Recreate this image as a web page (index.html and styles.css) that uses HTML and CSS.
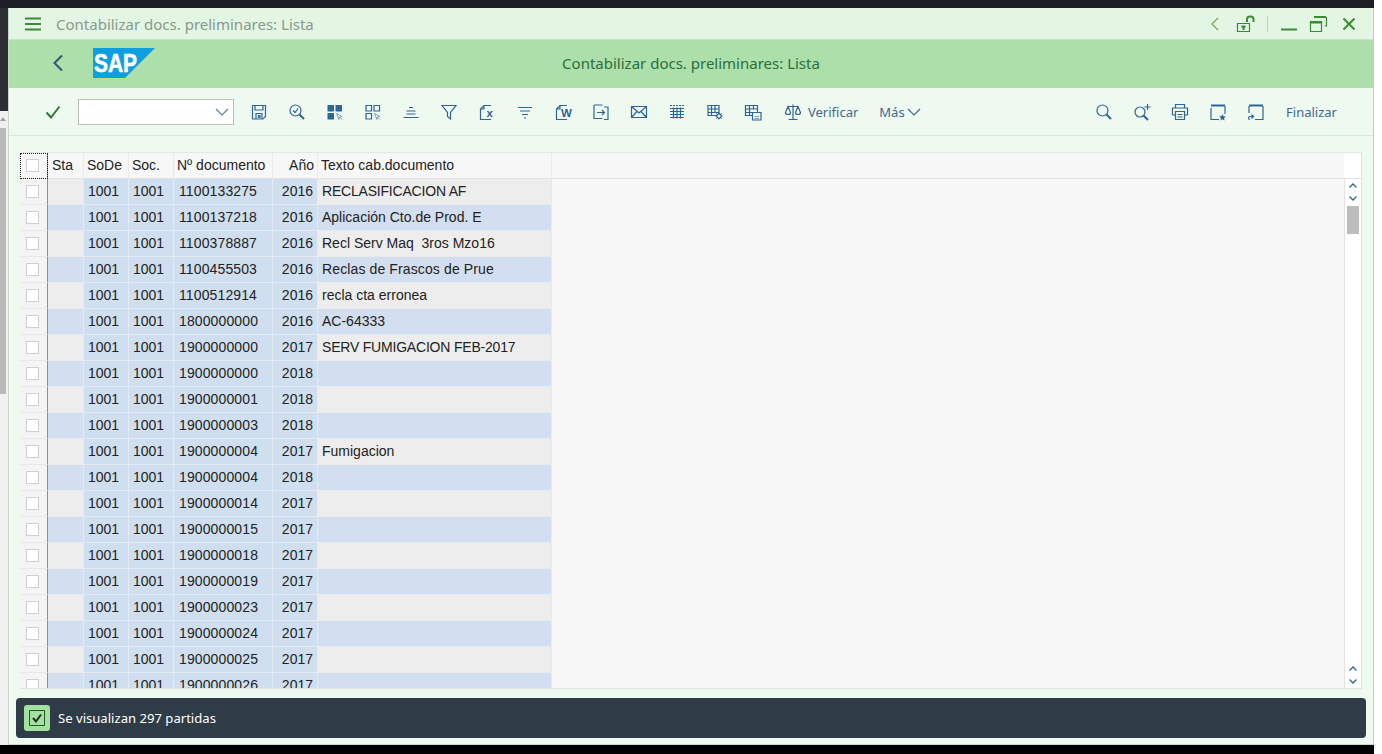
FILE: index.html
```html
<!DOCTYPE html>
<html lang="es">
<head>
    <meta charset="UTF-8">
    <title>Contabilizar docs. preliminares: Lista</title>
    <link rel="stylesheet" href="styles.css">
</head>
<body>
    <div class="screen">
        <div class="top-strip"></div>
        <div class="middle">
            <div class="left-strip">
                <div class="left-dark"></div>
                <div class="left-track">
                    <span class="left-arrow"></span>
                    <div class="left-thumb"></div>
                </div>
            </div>
            <div class="window">
                <div class="titlebar">
                    <svg class="menu-icon" width="16" height="14" viewBox="0 0 16 14"><path d="M0 1.5h16M0 7h16M0 12.5h16"/></svg>
                    <span class="title-text">Contabilizar docs. preliminares: Lista</span>
                    <div class="title-actions">
                        <svg class="win-icon" width="20" height="20" viewBox="0 0 20 20"><path class="thin olive" d="M13 4L7 10l6 6"/></svg>
                        <svg class="win-icon lock" width="20" height="20" viewBox="0 0 20 20"><path class="thin" d="M2.5 9.5h12v8h-12z"/><path d="M12 8V5.500a3 3 0 0 1 3-3h.5a3 3 0 0 1 3 3v2.500"/><path class="dot" d="M6.500 11.500h4v2l-1 .5v2h-2v-2l-1-.5z"/></svg>
                        <span class="title-sep"></span>
                        <svg class="win-icon min" width="20" height="20" viewBox="0 0 20 20"><path d="M2 15.500h16"/></svg>
                        <svg class="win-icon max" width="20" height="20" viewBox="0 0 20 20"><path class="thin" d="M2.500 7.500h11v10h-11z"/><path d="M2.500 8.500h11" /><path d="M6 3h12"/><path class="thin" d="M18.500 3v9h-2"/></svg>
                        <svg class="win-icon close" width="20" height="20" viewBox="0 0 20 20"><path d="M4.500 4.500l11 11M15.500 4.500l-11 11"/></svg>
                    </div>
                </div>

                <div class="banner">
                    <svg class="back-icon" width="12" height="18" viewBox="0 0 12 18"><path d="M10 1.500L2.500 9l7.500 7.500"/></svg>
                    <svg class="sap-logo" width="62" height="30" viewBox="0 0 62 30">
                        <polygon points="0,0 62,0 32,30 0,30" fill="#0f9fe0"/>
                        <text x="1" y="24" class="sap-text" textLength="43" lengthAdjust="spacingAndGlyphs">SAP</text>
                    </svg>
                    <span class="banner-title">Contabilizar docs. preliminares: Lista</span>
                </div>

                <div class="toolbar">
                    <span class="tool"><svg width="20" height="20" viewBox="0 0 20 20"><path class="ok" d="M3.500 10.500l4.500 5 8.500-11"/></svg></span>
                    <div class="command">
                        <svg width="14" height="8" viewBox="0 0 14 8"><path d="M1 1l6 6 6-6"/></svg>
                    </div>
                    <span class="tool"><svg width="20" height="20" viewBox="0 0 20 20"><path d="M3.500 3.500h13v11l-2.500 2.500h-10.500z"/><path d="M6 3.500v4.500h8v-4.500M7 17v-5.500h6V17"/><path d="M9.500 13.500h1.500v2h-1.500z"/></svg></span>
                    <span class="tool"><svg width="20" height="20" viewBox="0 0 20 20"><circle cx="8.500" cy="8.500" r="5.500"/><path class="bold" d="M12.500 12.500L17 17"/><path d="M6 8.500l2 2 3-4"/></svg></span>
                    <span class="tool"><svg width="20" height="20" viewBox="0 0 20 20"><path class="solid" d="M2.500 3h6.500v6.500H2.500zM10.500 3H17v6.500h-6.500zM2.500 11H9v6.500H2.500z"/><path class="thin" d="M11.500 11.500l5.500 3-2.500 .5-.5 2.500zM15 15.500l2 2"/></svg></span>
                    <span class="tool"><svg width="20" height="20" viewBox="0 0 20 20"><path d="M3 3.500h5.500V9H3zM11 3.500h5.500V9H11zM3 11.500h5.500V17H3z"/><path class="thin" d="M11.500 11.500l5.500 3-2.500 .5-.5 2.500zM15 15.500l2 2"/></svg></span>
                    <span class="tool"><svg width="20" height="20" viewBox="0 0 20 20"><path d="M8 5.500h4M5.500 9h9M5.500 12h9M2.500 15.500h15"/></svg></span>
                    <span class="tool"><svg width="20" height="20" viewBox="0 0 20 20"><path d="M3 3.500h14l-5.500 7v6.500l-3-2.500v-4z"/></svg></span>
                    <span class="tool"><svg width="20" height="20" viewBox="0 0 20 20"><path d="M14 3.500H7L3.500 7v10.500H14M7 3.500V7H3.500"/><text x="9.500" y="15" class="icon-letter">x</text></svg></span>
                    <span class="tool"><svg width="20" height="20" viewBox="0 0 20 20"><path d="M3 5.500h14M5 9h10M7 12.500h6M9 16h2"/></svg></span>
                    <span class="tool"><svg width="20" height="20" viewBox="0 0 20 20"><path d="M14 3.500H7L3.500 7v10.500H14M7 3.500V7H3.500"/><text x="8" y="15" class="icon-letter">W</text></svg></span>
                    <span class="tool"><svg width="20" height="20" viewBox="0 0 20 20"><path d="M3 3h8.500M3 3v13.500h8.500M13 5h4v12.500h-4"/><path d="M6 10.500h7.500M11 8l2.500 2.500-2.500 2.500"/></svg></span>
                    <span class="tool"><svg width="20" height="20" viewBox="0 0 20 20"><path d="M2.500 4.500h15v11h-15zM2.500 4.500L10 11l7.500-6.500M2.500 15.500L8 9.500M17.500 15.500L12 9.500"/></svg></span>
                    <span class="tool"><svg width="20" height="20" viewBox="0 0 20 20"><path class="dash" d="M3 3.500h14"/><path d="M3 6.500h14M3 9.500h14M3 12.500h14M3 15.500h14M6.500 5.500v11M10 5.500v11M13.500 5.500v11"/></svg></span>
                    <span class="tool"><svg width="20" height="20" viewBox="0 0 20 20"><path d="M3 3.500h11v10H3zM3 7h11M3 10.500h11M6.500 3.500v10M10 3.500v7"/><circle class="clear" cx="14" cy="14" r="2.200"/><path class="gear" d="M14 10.500v1.500M14 16v1.500M10.500 14H12M16 14h1.500M11.500 11.500l1 1M15.500 15.500l1 1M16.500 11.500l-1 1M12.500 15.500l-1 1"/></svg></span>
                    <span class="tool"><svg width="20" height="20" viewBox="0 0 20 20"><path d="M2.500 3.500h12v10h-12zM2.500 7h12M2.500 10.500h12M6.500 3.500v10M10.500 3.500v3.500"/><path class="clear" d="M9.500 10.500h8.500v7.500H9.500z"/><path class="thin" d="M11.500 14.500h4.500M11.500 16.500h4.500"/></svg></span>
                    <span class="tool-text verify">
                        <svg width="20" height="20" viewBox="0 0 20 20"><path d="M10 2.500v14.500M5.500 17.500h9M5 4.500h10M5 4.500l-2.500 6a2.500 2 0 0 0 5 0zM15 4.500l-2.500 6a2.500 2 0 0 0 5 0z"/></svg>
                        Verificar
                    </span>
                    <span class="tool-text more">
                        Más
                        <svg width="14" height="8" viewBox="0 0 14 8"><path d="M1 1l6 6 6-6"/></svg>
                    </span>
                    <div class="toolbar-right">
                        <span class="tool"><svg width="20" height="20" viewBox="0 0 20 20"><circle cx="8.500" cy="8.500" r="5.500"/><path class="bold" d="M12.500 12.500L17 17"/></svg></span>
                        <span class="tool"><svg width="20" height="20" viewBox="0 0 20 20"><circle cx="8" cy="10" r="5"/><path class="bold" d="M11.500 13.500L16 18"/><path d="M15.500 2v6M12.500 5h6"/></svg></span>
                        <span class="tool"><svg width="20" height="20" viewBox="0 0 20 20"><path d="M5.500 6V2.500h9V6M5.500 13H2.500V6h15v7h-3"/><path d="M5.500 9.500h9v8h-9zM7.500 12.500h5M7.500 15h5"/></svg></span>
                        <span class="tool"><svg width="20" height="20" viewBox="0 0 20 20"><path d="M3 6v11.500h8"/><path class="bold" d="M3 3.500h14"/><path d="M17 4v8"/><path class="solid" d="M14.500 12l1 2.200 2.300.3-1.700 1.600.4 2.400-2-1.200-2 1.200.4-2.400-1.700-1.600 2.300-.3z"/></svg></span>
                        <span class="tool"><svg width="20" height="20" viewBox="0 0 20 20"><path d="M3 4v7M17 4v13.500H9"/><path class="bold" d="M3 3.500h14"/><path d="M7 14.500H4a1.500 1.500 0 0 0 0 3M5.500 12.500l2 2-2 2"/></svg></span>
                        <span class="tool-text finish">Finalizar</span>
                    </div>
                </div>

                <div class="content">
                    <div class="list-panel">
                        <div class="grid-scroll">
                            <table class="doc-table">
                                <colgroup>
                                    <col class="c-sel"><col class="c-sta"><col class="c-sode"><col class="c-soc"><col class="c-num"><col class="c-year"><col class="c-text"><col>
                                </colgroup>
                                <thead>
                                    <tr>
                                        <th class="sel sel-head"><span class="check"></span></th>
                                        <th class="sta-head">Sta</th>
                                        <th>SoDe</th>
                                        <th>Soc.</th>
                                        <th>Nº documento</th>
                                        <th class="right">Año</th>
                                        <th>Texto cab.documento</th>
                                        <th class="filler"></th>
                                    </tr>
                                </thead>
                                <tbody>
                                    <tr class="odd"><td class="sel"><span class="check"></span></td><td class="sta"></td><td class="key">1001</td><td class="key">1001</td><td class="key num">1100133275</td><td class="key right">2016</td><td class="txt caps">RECLASIFICACION AF</td><td class="filler"></td></tr>
                                    <tr class="even"><td class="sel"><span class="check"></span></td><td class="sta"></td><td class="key">1001</td><td class="key">1001</td><td class="key num">1100137218</td><td class="key right">2016</td><td class="txt">Aplicación Cto.de Prod. E</td><td class="filler"></td></tr>
                                    <tr class="odd"><td class="sel"><span class="check"></span></td><td class="sta"></td><td class="key">1001</td><td class="key">1001</td><td class="key num">1100378887</td><td class="key right">2016</td><td class="txt">Recl Serv Maq&nbsp; 3ros Mzo16</td><td class="filler"></td></tr>
                                    <tr class="even"><td class="sel"><span class="check"></span></td><td class="sta"></td><td class="key">1001</td><td class="key">1001</td><td class="key num">1100455503</td><td class="key right">2016</td><td class="txt wide">Reclas de Frascos de Prue</td><td class="filler"></td></tr>
                                    <tr class="odd"><td class="sel"><span class="check"></span></td><td class="sta"></td><td class="key">1001</td><td class="key">1001</td><td class="key num">1100512914</td><td class="key right">2016</td><td class="txt">recla cta erronea</td><td class="filler"></td></tr>
                                    <tr class="even"><td class="sel"><span class="check"></span></td><td class="sta"></td><td class="key">1001</td><td class="key">1001</td><td class="key num">1800000000</td><td class="key right">2016</td><td class="txt">AC-64333</td><td class="filler"></td></tr>
                                    <tr class="odd"><td class="sel"><span class="check"></span></td><td class="sta"></td><td class="key">1001</td><td class="key">1001</td><td class="key num">1900000000</td><td class="key right">2017</td><td class="txt caps">SERV FUMIGACION FEB-2017</td><td class="filler"></td></tr>
                                    <tr class="even"><td class="sel"><span class="check"></span></td><td class="sta"></td><td class="key">1001</td><td class="key">1001</td><td class="key num">1900000000</td><td class="key right">2018</td><td class="txt"></td><td class="filler"></td></tr>
                                    <tr class="odd"><td class="sel"><span class="check"></span></td><td class="sta"></td><td class="key">1001</td><td class="key">1001</td><td class="key num">1900000001</td><td class="key right">2018</td><td class="txt"></td><td class="filler"></td></tr>
                                    <tr class="even"><td class="sel"><span class="check"></span></td><td class="sta"></td><td class="key">1001</td><td class="key">1001</td><td class="key num">1900000003</td><td class="key right">2018</td><td class="txt"></td><td class="filler"></td></tr>
                                    <tr class="odd"><td class="sel"><span class="check"></span></td><td class="sta"></td><td class="key">1001</td><td class="key">1001</td><td class="key num">1900000004</td><td class="key right">2017</td><td class="txt">Fumigacion</td><td class="filler"></td></tr>
                                    <tr class="even"><td class="sel"><span class="check"></span></td><td class="sta"></td><td class="key">1001</td><td class="key">1001</td><td class="key num">1900000004</td><td class="key right">2018</td><td class="txt"></td><td class="filler"></td></tr>
                                    <tr class="odd"><td class="sel"><span class="check"></span></td><td class="sta"></td><td class="key">1001</td><td class="key">1001</td><td class="key num">1900000014</td><td class="key right">2017</td><td class="txt"></td><td class="filler"></td></tr>
                                    <tr class="even"><td class="sel"><span class="check"></span></td><td class="sta"></td><td class="key">1001</td><td class="key">1001</td><td class="key num">1900000015</td><td class="key right">2017</td><td class="txt"></td><td class="filler"></td></tr>
                                    <tr class="odd"><td class="sel"><span class="check"></span></td><td class="sta"></td><td class="key">1001</td><td class="key">1001</td><td class="key num">1900000018</td><td class="key right">2017</td><td class="txt"></td><td class="filler"></td></tr>
                                    <tr class="even"><td class="sel"><span class="check"></span></td><td class="sta"></td><td class="key">1001</td><td class="key">1001</td><td class="key num">1900000019</td><td class="key right">2017</td><td class="txt"></td><td class="filler"></td></tr>
                                    <tr class="odd"><td class="sel"><span class="check"></span></td><td class="sta"></td><td class="key">1001</td><td class="key">1001</td><td class="key num">1900000023</td><td class="key right">2017</td><td class="txt"></td><td class="filler"></td></tr>
                                    <tr class="even"><td class="sel"><span class="check"></span></td><td class="sta"></td><td class="key">1001</td><td class="key">1001</td><td class="key num">1900000024</td><td class="key right">2017</td><td class="txt"></td><td class="filler"></td></tr>
                                    <tr class="odd"><td class="sel"><span class="check"></span></td><td class="sta"></td><td class="key">1001</td><td class="key">1001</td><td class="key num">1900000025</td><td class="key right">2017</td><td class="txt"></td><td class="filler"></td></tr>
                                    <tr class="even"><td class="sel"><span class="check"></span></td><td class="sta"></td><td class="key">1001</td><td class="key">1001</td><td class="key num">1900000026</td><td class="key right">2017</td><td class="txt"></td><td class="filler"></td></tr>
                                </tbody>
                            </table>
                        </div>
                        <div class="v-scroll">
                            <div class="v-scroll-head"></div>
                            <div class="v-scroll-body">
                                <svg width="8" height="5" viewBox="0 0 8 5"><path d="M.5 4.500L4 1l3.500 3.500"/></svg>
                                <svg class="down" width="8" height="5" viewBox="0 0 8 5"><path d="M.5 .5L4 4l3.500-3.500"/></svg>
                                <div class="v-thumb"></div>
                                <svg class="bottom-up" width="8" height="5" viewBox="0 0 8 5"><path d="M.5 4.500L4 1l3.500 3.500"/></svg>
                                <svg class="down" width="8" height="5" viewBox="0 0 8 5"><path d="M.5 .5L4 4l3.500-3.500"/></svg>
                            </div>
                        </div>
                    </div>
                    <div class="status-bar">
                        <span class="status-icon">
                            <svg width="16" height="16" viewBox="0 0 16 16"><path class="box" d="M.5 .5h15v15H.5z"/><path class="tick" d="M4 8l3 3.500 5-7"/></svg>
                        </span>
                        <span class="status-text">Se visualizan 297 partidas</span>
                    </div>
                </div>
            </div>
        </div>
        <div class="bottom-strip"></div>
    </div>
</body>
</html>
```

FILE: styles.css
```css
html, body {
    margin: 0;
    padding: 0;
    height: 100%;
    background: #ffffff;
    overflow: hidden;
}
body {
    font-family: 'Noto Sans', sans-serif;
}
.screen {
    width: 1374px;
    height: 754px;
    display: flex;
    flex-direction: column;
}
.top-strip {
    height: 8px;
    background: #1c1e26;
}
.middle {
    flex: 1;
    display: flex;
    min-height: 0;
}
.bottom-strip {
    height: 9px;
    background: #000000;
}
.left-strip {
    width: 8px;
    display: flex;
    flex-direction: column;
    background: #f0f0f0;
}
.left-dark {
    height: 103px;
    background: #2c2e33;
}
.left-track {
    flex: 1;
    padding-right: 2px;
}
.left-arrow {
    display: block;
    height: 17px;
    box-sizing: border-box;
    padding-top: 6px;
}
.left-arrow::before {
    content: "";
    display: block;
    width: 0;
    height: 0;
    border-left: 3px solid transparent;
    border-right: 3px solid transparent;
    border-bottom: 4px solid #a0a0a0;
}
.left-thumb {
    height: 266px;
    background: #b9b9b9;
}
.window {
    flex: 1;
    display: flex;
    flex-direction: column;
    min-width: 0;
    background: #eef9f0;
    border-left: 1px solid #cfd3cf;
    border-right: 1px solid #c8c8c8;
    border-bottom: 1px solid #d4d4d4;
}

/* title bar */
.titlebar {
    height: 31px;
    display: flex;
    align-items: center;
    background: #e3f5e3;
    border-bottom: 1px solid #cfdccf;
    padding-left: 16px;
}
.menu-icon path {
    stroke: #3a8a36;
    stroke-width: 2;
    fill: none;
}
.title-text {
    margin-left: 15px;
    font-size: 15px;
    color: #8a9a8c;
}
.title-actions {
    margin-left: auto;
    display: flex;
    align-items: center;
    padding-right: 14px;
}
.win-icon {
    fill: none;
    stroke: #3a8a36;
    stroke-width: 2;
}
.win-icon .thin {
    stroke-width: 1.200;
}
.win-icon .olive {
    stroke: #7ba45a;
}
.win-icon .dot {
    fill: #3a8a36;
    stroke: none;
}
.title-sep {
    width: 1px;
    height: 16px;
    background: #c2cfc2;
    margin-left: 12px;
}
.win-icon.lock {
    margin-left: 10px;
}
.win-icon.min {
    margin-left: 11px;
}
.win-icon.max {
    margin-left: 9px;
}
.win-icon.close {
    margin-left: 11px;
}

/* banner */
.banner {
    height: 48px;
    box-sizing: border-box;
    display: flex;
    align-items: center;
    position: relative;
    background: #addfab;
    padding: 0 0 2px 43px;
}
.back-icon path {
    fill: none;
    stroke: #2f5578;
    stroke-width: 2;
}
.sap-logo {
    margin-left: 29px;
}
.sap-text {
    font-family: 'Liberation Sans', sans-serif;
    font-weight: bold;
    font-size: 26px;
    fill: #ffffff;
    stroke: #ffffff;
    stroke-width: 0.6;
}
.banner-title {
    position: absolute;
    left: 0;
    right: 0;
    text-align: center;
    font-size: 15px;
    color: #2c6e3a;
}

/* toolbar */
.toolbar {
    height: 47px;
    display: flex;
    align-items: center;
    padding-left: 25px;
    border-bottom: 1px solid #d3e8d6;
}
.tool {
    width: 38px;
    height: 32px;
    display: flex;
    align-items: center;
    justify-content: center;
    flex-shrink: 0;
}
.toolbar svg {
    fill: none;
    stroke: #2f6497;
    stroke-width: 1.200;
}
.toolbar svg .bold {
    stroke-width: 2;
}
.toolbar svg .thin {
    stroke-width: 0.800;
    stroke: #5b8fc0;
}
.toolbar svg .solid {
    fill: #2f6497;
    stroke: none;
}
.toolbar svg .clear {
    fill: #eef9f0;
}
.toolbar svg .gear {
    stroke-width: 1;
}
.toolbar svg .dash {
    stroke-dasharray: 2 1;
}
.toolbar svg .ok {
    stroke: #2f7a32;
    stroke-width: 2;
}
.icon-letter {
    font-family: 'Liberation Sans', sans-serif;
    font-weight: bold;
    font-size: 11.500px;
    fill: #2f6497;
    stroke: none;
}
.command {
    width: 156px;
    height: 26px;
    box-sizing: border-box;
    margin: 0 6px;
    background: #ffffff;
    border: 1px solid #bdbdbd;
    display: flex;
    align-items: center;
    justify-content: flex-end;
    padding-right: 4px;
    flex-shrink: 0;
}
.command svg {
    stroke: #5a7f9e;
}
.tool-text {
    display: flex;
    align-items: center;
    font-size: 13px;
    color: #42688c;
}
.verify {
    margin-left: 11px;
    gap: 5px;
}
.more {
    margin-left: 21px;
    gap: 2px;
}
.more svg {
    stroke: #42688c;
}
.toolbar-right {
    margin-left: auto;
    display: flex;
    align-items: center;
    padding-right: 36px;
}
.finish {
    margin-left: 11px;
}

/* list */
.content {
    flex: 1;
    display: flex;
    flex-direction: column;
    min-height: 0;
    padding: 16px 7px 6px;
}
.list-panel {
    height: 537px;
    margin: 0 4px;
    display: flex;
    background: #f7f7f7;
    border-top: 1px solid #e5e5e5;
    box-sizing: border-box;
    border-right: 1px solid #e2e2e2;
    border-bottom: 1px solid #e2e2e2;
}
.grid-scroll {
    flex: 1;
    min-width: 0;
    overflow: hidden;
}
.doc-table {
    width: 100%;
    table-layout: fixed;
    border-collapse: separate;
    border-spacing: 0;
    font-family: 'Liberation Sans', Arial, sans-serif;
    font-size: 14px;
    color: #222222;
}
.c-sel { width: 28px; }
.c-sta { width: 36px; }
.c-sode { width: 45px; }
.c-soc { width: 45px; }
.c-num { width: 99px; }
.c-year { width: 45px; }
.c-text { width: 234px; }
.doc-table th,
.doc-table td {
    height: 26px;
    box-sizing: border-box;
    padding: 0 3px 2px;
    text-align: left;
    font-weight: normal;
    white-space: pre;
    overflow: hidden;
    border-right: 1px solid #e9e9e9;
    border-bottom: 1px solid #e9e9e9;
}
.doc-table th {
    background: #f7f7f7;
    border-bottom-color: #e2e2e2;
}
.doc-table th.sta-head {
    padding-left: 4px;
}
.doc-table th.filler,
.doc-table td.filler {
    border-right: none;
    background: #f7f7f7;
}
.doc-table td.filler {
    border-bottom: none;
}
.doc-table .sel {
    padding: 0 0 0 6px;
    background: #f4f4f4;
    border-right: 1px solid #8e8e8e;
}
.doc-table .sel-head {
    background: #f7f7f7;
    outline: 1px dotted #222222;
    outline-offset: -1px;
}
.check {
    display: block;
    width: 13px;
    height: 13px;
    background: #ffffff;
    border: 1px solid #d0cfd6;
    box-sizing: border-box;
}
.doc-table td.key {
    padding-left: 4px;
    background: #d0dff0;
    border-color: #e4ebf4;
}
.doc-table td.num {
    padding-left: 5px;
    letter-spacing: 0.120px;
}
.doc-table .right {
    text-align: right;
}
.doc-table td.right {
    padding-right: 4px;
}
.doc-table th.right {
    padding-right: 3px;
}
.doc-table td.txt {
    padding-left: 4px;
}
.doc-table td.caps {
    letter-spacing: -0.200px;
}
.doc-table td.wide {
    letter-spacing: 0.120px;
}
.odd .sta,
.odd .txt {
    background: #ededed;
}
.even .sta,
.even .txt {
    background: #d3dff0;
    border-color: #e4ebf4;
}

/* scrollbar of the list */
.v-scroll {
    width: 17px;
    flex-shrink: 0;
    display: flex;
    flex-direction: column;
    background: #ffffff;
}
.v-scroll-head {
    height: 26px;
    box-sizing: border-box;
    border-bottom: 1px solid #e2e2e2;
}
.v-scroll-body {
    flex: 1;
    display: flex;
    flex-direction: column;
    align-items: center;
    border-left: 1px solid #e2e2e2;
    padding-top: 4px;
}
.v-scroll-body svg {
    fill: none;
    stroke: #2f6497;
    stroke-width: 1.300;
    flex-shrink: 0;
}
.v-scroll-body .down {
    margin-top: 8px;
}
.v-scroll-body .bottom-up {
    margin-top: auto;
}
.v-thumb {
    width: 12px;
    height: 28px;
    margin-top: 5px;
    background: #bdbdbd;
}
.v-scroll-body .down:last-child {
    margin-bottom: 4px;
}

/* status bar */
.status-bar {
    height: 40px;
    margin-top: 9px;
    display: flex;
    align-items: center;
    background: #2f3b47;
    border-radius: 4px;
    padding-left: 8px;
}
.status-icon {
    width: 26px;
    height: 26px;
    display: flex;
    align-items: center;
    justify-content: center;
    background: #a4e09e;
    border-radius: 3px;
}
.status-icon svg {
    fill: none;
}
.status-icon .box {
    stroke: #1e5a2a;
}
.status-icon .tick {
    stroke: #1d2b22;
    stroke-width: 2;
}
.status-text {
    margin-left: 8px;
    font-size: 13.100px;
    color: #ffffff;
}
```
